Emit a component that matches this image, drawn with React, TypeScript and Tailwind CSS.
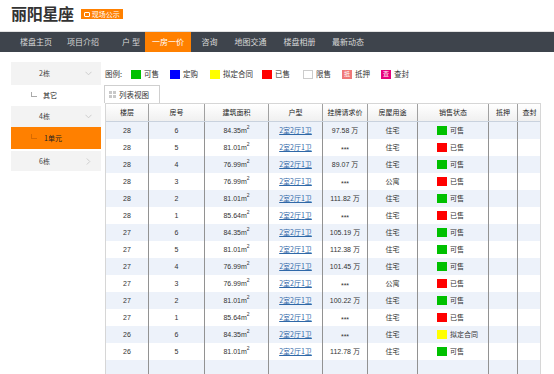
import React from "react";

const cjk = { fontFamily: '"Noto Sans CJK SC", "Noto Sans", sans-serif' };
const num = { fontFamily: '"Liberation Sans", "Noto Sans CJK SC", sans-serif' };

type Row = [string, string, string, string, string, string];
const rows: Row[] = [
  ["28", "6", "84.35", "97.58 万", "住宅", "可售"],
  ["28", "5", "81.01", "***", "住宅", "已售"],
  ["28", "4", "76.99", "89.07 万", "住宅", "可售"],
  ["28", "3", "76.99", "***", "公寓", "已售"],
  ["28", "2", "81.01", "111.82 万", "住宅", "可售"],
  ["28", "1", "85.64", "***", "住宅", "已售"],
  ["27", "6", "84.35", "105.19 万", "住宅", "可售"],
  ["27", "5", "81.01", "112.38 万", "住宅", "可售"],
  ["27", "4", "76.99", "101.45 万", "住宅", "可售"],
  ["27", "3", "76.99", "***", "公寓", "已售"],
  ["27", "2", "81.01", "100.22 万", "住宅", "可售"],
  ["27", "1", "85.64", "***", "住宅", "已售"],
  ["26", "6", "84.35", "***", "住宅", "拟定合同"],
  ["26", "5", "81.01", "112.78 万", "住宅", "可售"],
];

const statusColor: Record<string, string> = {
  可售: "bg-[#00c000]",
  已售: "bg-[#ff0000]",
  拟定合同: "bg-[#ffff00]",
};

const navItems: { label: string; w: string; active?: boolean; extra?: string }[] = [
  { label: "楼盘主页", w: "w-[48px]" },
  { label: "项目介绍", w: "w-[46px]" },
  { label: "户 型", w: "w-[39px]", extra: "pl-[11px]" },
  { label: "一房一价", w: "w-[46px]", active: true },
  { label: "咨询", w: "w-[37px]" },
  { label: "地图交通", w: "w-[45px]" },
  { label: "楼盘相册", w: "w-[53px]" },
  { label: "最新动态", w: "w-[44px]" },
];

const grid = "grid grid-cols-[43px_56px_64px_54px_45px_50px_71px_29px_23px] grid-rows-[100%]";

function ChevronDown() {
  return (
    <svg width="7" height="5" viewBox="0 0 7 5">
      <polyline points="0.5,0.8 3.5,3.8 6.5,0.8" fill="none" stroke="#c8c8c8" strokeWidth="0.9" />
    </svg>
  );
}
function ChevronRight() {
  return (
    <svg width="5" height="7" viewBox="0 0 5 7">
      <polyline points="0.8,0.5 3.8,3.5 0.8,6.5" fill="none" stroke="#c8c8c8" strokeWidth="0.9" />
    </svg>
  );
}

function Legend({ box, label, w, char }: { box: string; label: string; w: string; char?: string }) {
  return (
    <div className={`flex items-center ${w}`}>
      <span className={`w-[10px] h-[9px] ${box} flex items-center justify-center text-[6px] leading-none text-white`}>
        {char}
      </span>
      <span className="ml-[3px] text-[7.5px] text-[#333]">{label}</span>
    </div>
  );
}

export default function App() {
  return (
    <div className="w-[554px] h-[374px] overflow-hidden bg-white" style={cjk}>
      {/* header */}
      <div className="h-[31px] flex items-start pl-[11px] pt-[2px]">
        <span className="text-[16px] font-bold text-[#333] leading-[22px] tracking-[-0.3px]">丽阳星座</span>
        <span className="ml-[7px] mt-[7px] h-[10px] px-[3px] bg-[#ff8000] flex items-center text-white text-[7px] leading-none">
          <span className="w-[6px] h-[5px] border border-white rounded-[1px] mr-[2px]" />
          现场公示
        </span>
      </div>
      <div className="h-px bg-[#e2e2e2]" />
      {/* nav */}
      <div className="h-[20px] bg-[#3e444c] flex pl-[12px]">
        {navItems.map((n) => (
          <div
            key={n.label}
            className={`${n.w} h-full flex items-center justify-center text-[8px] whitespace-pre ${
              n.active ? "bg-[#ff8000] text-white" : "text-[#d8d8d8]"
            } ${n.extra ?? ""}`}
          >
            {n.label}
          </div>
        ))}
      </div>

      <div className="flex">
        {/* sidebar */}
        <div className="ml-[11px] mt-[10px] w-[90px] text-[7px] text-[#444]">
          <div className="h-[23px] bg-[#f3f3f3] flex items-center">
            <span className="ml-[28px] w-[46px]">2栋</span>
            <ChevronDown />
          </div>
          <div className="h-[21px] flex items-center">
            <span className="ml-[20px] mb-[3px] w-[6px] h-[5px] border-l border-b border-[#aaa]" />
            <span className="ml-[6px] text-[#222]">其它</span>
          </div>
          <div className="h-[21px] bg-[#f3f3f3] flex items-center">
            <span className="ml-[28px] w-[46px]">4栋</span>
            <ChevronDown />
          </div>
          <div className="h-[22px] bg-[#ff8000] flex items-center">
            <span className="ml-[20px] mb-[3px] w-[6px] h-[5px] border-l border-b border-[#d86a00]" />
            <span className="ml-[7px] text-[#222]">1单元</span>
          </div>
          <div className="mt-[2px] h-[20px] bg-[#f3f3f3] flex items-center">
            <span className="ml-[28px] w-[47px]">6栋</span>
            <ChevronRight />
          </div>
        </div>

        {/* main */}
        <div className="ml-[3px] w-[437px]">
          <div className="mt-[15px] h-[14px] flex items-center">
            <span className="ml-[1px] w-[26px] text-[7.5px] text-[#333]">图例:</span>
            <Legend box="bg-[#00c000]" label="可售" w="w-[39px]" />
            <Legend box="bg-[#0000ff]" label="定购" w="w-[40px]" />
            <Legend box="bg-[#ffff00]" label="拟定合同" w="w-[52px]" />
            <Legend box="bg-[#ff0000]" label="已售" w="w-[41px]" />
            <Legend box="bg-white border border-[#ccc]" label="限售" w="w-[39px]" />
            <Legend box="bg-[#f07878]" label="抵押" w="w-[39px]" char="抵" />
            <Legend box="bg-[#e8007c]" label="查封" w="w-[39px]" char="查" />
          </div>
          {/* tab */}
          <div className="mt-[4px] flex">
            <div className="h-[18px] w-[56px] border border-b-0 border-[#cfcfcf] flex items-center pl-[4px] bg-white">
              <span className="grid grid-cols-2 gap-[1px] w-[7px] h-[7px]">
                <span className="bg-[#c8c8c8]" />
                <span className="bg-[#c8c8c8]" />
                <span className="bg-[#c8c8c8]" />
                <span className="bg-[#c8c8c8]" />
              </span>
              <span className="ml-[3px] text-[7.5px] text-[#333]">列表视图</span>
            </div>
          </div>
          {/* table */}
          <div className="ml-[1px] w-[436px] border-l border-r border-t border-[#d6d6d6]">
            <div className={`${grid} h-[18px] bg-gradient-to-b from-white to-[#f0f0f0] border-b border-[#c9d2de] text-[7px] text-[#222]`}>
              {["楼层", "房号", "建筑面积", "户型", "挂牌请求价", "房屋用途", "销售状态", "抵押", "查封"].map((h, i) => (
                <div key={h} className={`flex items-center justify-center ${i < 8 ? "border-r border-[#a0a0a0]" : ""}`}>
                  {h}
                </div>
              ))}
            </div>
            {[...rows, null].map((r, idx) => (
              <div
                key={idx}
                className={`${grid} h-[17px] overflow-hidden text-[7px] leading-none text-[#333] ${idx % 2 === 0 ? "bg-[#edf2fa]" : "bg-white"}`}
              >
                {r ? (
                  <>
                    <div className="flex items-center justify-center border-r border-[#929292]" style={num}>{r[0]}</div>
                    <div className="flex items-center justify-center border-r border-[#929292]" style={num}>{r[1]}</div>
                    <div className="flex items-center justify-center border-r border-[#929292]" style={num}>
                      <span>{r[2]}m</span>
                      <span className="text-[5px] leading-none relative -top-[3px]">2</span>
                    </div>
                    <div className="flex items-center justify-center border-r border-[#929292]">
                      <span className="text-[#2f68a8] underline">2室2厅1卫</span>
                    </div>
                    <div className="flex items-center justify-center border-r border-[#929292]" style={num}>
                      {r[3] === "***" ? <span className="relative top-[1.5px]">***</span> : r[3]}
                    </div>
                    <div className="flex items-center justify-center border-r border-[#929292]">{r[4]}</div>
                    <div className="flex items-center pl-[19px] border-r border-[#929292]">
                      <span className={`w-[10px] h-[9px] ${statusColor[r[5]]}`} />
                      <span className="ml-[3px]">{r[5]}</span>
                    </div>
                    <div className="border-r border-[#929292]" />
                    <div />
                  </>
                ) : (
                  <>
                    {Array.from({ length: 8 }).map((_, i) => (
                      <div key={i} className="border-r border-[#929292]" />
                    ))}
                    <div />
                  </>
                )}
              </div>
            ))}
          </div>
        </div>
      </div>
    </div>
  );
}
